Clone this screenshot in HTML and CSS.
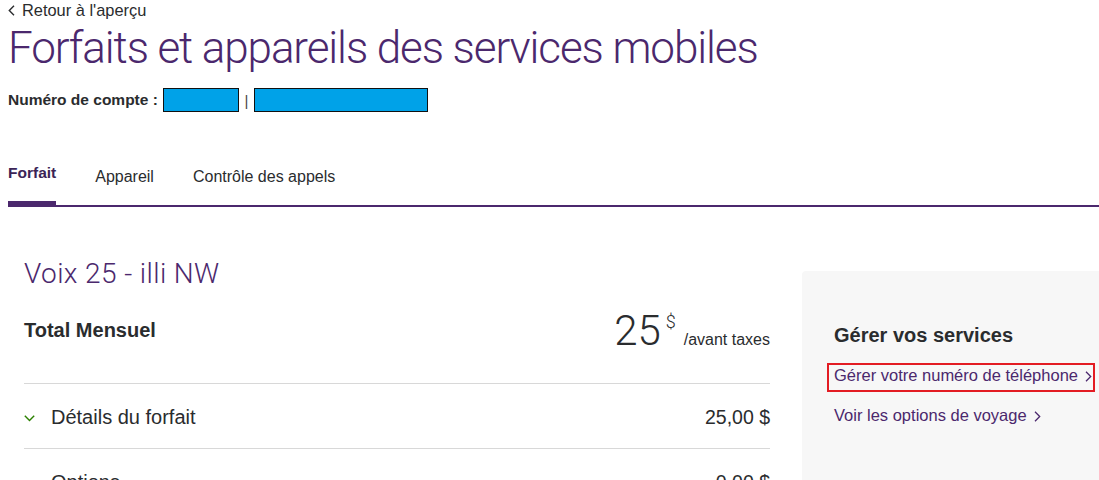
FILE: index.html
```html
<!DOCTYPE html>
<html lang="fr">
<head>
<meta charset="utf-8">
<title>Forfaits et appareils des services mobiles</title>
<link rel="stylesheet" href="styles.css">
</head>
<body>
<div class="page">
  <a class="back" href="#">
    <svg class="back-icon" width="7" height="11" viewBox="0 0 7 11"><path d="M6 0.8 L1.3 5.5 L6 10.2" fill="none" stroke="#2a2c2e" stroke-width="1.4"/></svg>
    <span>Retour à l'aperçu</span>
  </a>
  <h1 class="title">Forfaits et appareils des services mobiles</h1>
  <div class="account">
    <span class="account-label">Numéro de compte :</span>
    <span class="mask mask-short"></span>
    <span class="pipe">|</span>
    <span class="mask mask-long"></span>
  </div>

  <nav class="tabs">
    <a class="tab active" href="#">Forfait</a>
    <a class="tab" href="#">Appareil</a>
    <a class="tab" href="#">Contrôle des appels</a>
  </nav>

  <div class="content">
    <section class="plan">
      <h2 class="plan-name">Voix 25 - illi NW</h2>
      <div class="total">
        <span class="total-label">Total Mensuel</span>
        <div class="price">
          <span class="amount">25</span>
          <span class="cur">$</span>
          <span class="per">/avant taxes</span>
        </div>
      </div>
      <div class="row">
        <span class="row-label">
          <svg class="chev-down" width="11" height="7" viewBox="0 0 11 7"><path d="M0.8 0.8 L5.5 5.6 L10.2 0.8" fill="none" stroke="#2b8000" stroke-width="1.4"/></svg>
          Détails du forfait
        </span>
        <span class="row-value">25,00 $</span>
      </div>
      <div class="row">
        <span class="row-label"><span class="chev-space"></span>Options</span>
        <span class="row-value">0,00 $</span>
      </div>
    </section>

    <aside class="panel">
      <h3 class="panel-title">Gérer vos services</h3>
      <a class="link highlighted" href="#">Gérer votre numéro de téléphone
        <svg class="chev-right" width="7" height="11" viewBox="0 0 7 11"><path d="M1 0.8 L5.7 5.5 L1 10.2" fill="none" stroke="#4b286d" stroke-width="1.3"/></svg>
      </a>
      <a class="link second" href="#">Voir les options de voyage
        <svg class="chev-right" width="7" height="11" viewBox="0 0 7 11"><path d="M1 0.8 L5.7 5.5 L1 10.2" fill="none" stroke="#4b286d" stroke-width="1.3"/></svg>
      </a>
    </aside>
  </div>
</div>
</body>
</html>
```
FILE: styles.css
```css
* { box-sizing: border-box; }
html, body { margin: 0; padding: 0; background: #fff; }
body {
  font-family: "Liberation Sans", Arial, sans-serif;
  color: #2a2c2e;
  overflow: hidden;
}
a { text-decoration: none; color: inherit; }

.page {
  padding-left: 8px;
  width: 1099px;
}

.back {
  display: flex;
  align-items: center;
  gap: 7px;
  height: 20px;
  font-size: 16.4px;
  line-height: 20px;
  color: #2a2c2e;
}
.back-icon { display: block; margin-top: 1px; }

.title {
  margin: 2px 0 0;
  font-family: Roboto, "Liberation Sans", sans-serif;
  font-weight: 300;
  font-size: 44px;
  line-height: 52px;
  letter-spacing: -1.1px;
  color: #4b286d;
  white-space: nowrap;
}

.account {
  display: flex;
  align-items: center;
  margin-top: 14px;
  height: 24px;
}
.account-label {
  font-weight: 700;
  font-size: 15.5px;
  line-height: 20px;
  margin-right: 5px;
}
.mask {
  display: block;
  height: 24px;
  background: #00a2e8;
  border: 1px solid #111;
}
.mask-short { width: 76px; }
.mask-long { width: 174px; }
.pipe {
  font-size: 15px;
  width: 15px;
  text-align: center;
  color: #444;
}

.tabs {
  display: flex;
  align-items: flex-end;
  gap: 39px;
  margin-top: 51px;
  border-bottom: 2px solid #4b286d;
}
.tab {
  position: relative;
  font-size: 16px;
  line-height: 20px;
  padding-bottom: 18px;
  color: #2a2c2e;
}
.tab.active {
  font-weight: 700;
  font-size: 15.5px;
  color: #3b2456;
  padding-bottom: 22px;
}
.tab.active::after {
  content: "";
  position: absolute;
  left: 0;
  right: 0;
  bottom: -2px;
  height: 6px;
  background: #4b286d;
}

.content {
  display: flex;
  align-items: flex-start;
  gap: 32px;
  padding-left: 16px;
  margin-top: 51px;
}

.plan {
  flex: 0 0 746px;
}
.plan-name {
  margin: 0;
  font-family: Roboto, "Liberation Sans", sans-serif;
  font-weight: 300;
  font-size: 28px;
  line-height: 32px;
  letter-spacing: 0.4px;
  color: #4b286d;
}

.total {
  display: flex;
  justify-content: space-between;
  align-items: flex-start;
  margin-top: 20px;
  padding-bottom: 31px;
  border-bottom: 1px solid #d8d8d8;
}
.total-label {
  margin-top: 8px;
  font-weight: 700;
  font-size: 20px;
  line-height: 24px;
}
.price {
  display: flex;
  align-items: flex-start;
  height: 42px;
}
.amount {
  font-family: Roboto, "Liberation Sans", sans-serif;
  font-weight: 300;
  font-size: 42px;
  line-height: 42px;
}
.cur {
  font-family: Roboto, "Liberation Sans", sans-serif;
  font-weight: 300;
  font-size: 18px;
  line-height: 18px;
  margin: 3px 0 0 5px;
}
.per {
  font-size: 16px;
  line-height: 18px;
  margin: 21px 0 0 8px;
  color: #2a2c2e;
}

.row {
  display: flex;
  justify-content: space-between;
  padding: 21px 0 19px;
  border-bottom: 1px solid #d8d8d8;
  font-size: 20px;
  line-height: 24px;
}
.row-label {
  display: flex;
  align-items: center;
}
.chev-down { display: block; margin: 3px 16px 0 0; }
.chev-space { display: block; width: 27px; }
.row-value { color: #2a2c2e; font-size: 19.5px; }

.panel {
  flex: 1 1 auto;
  margin-top: 13px;
  min-height: 240px;
  background: #f7f7f7;
  border-radius: 4px 0 0 0;
  padding: 52px 0 0 32px;
}
.panel-title {
  margin: 0;
  font-weight: 700;
  font-size: 20px;
  line-height: 24px;
  color: #2a2c2e;
}
.link {
  display: inline-flex;
  align-items: center;
  gap: 7px;
  font-size: 16.5px;
  line-height: 20px;
  color: #4b286d;
}
.link .chev-right { display: block; margin-top: 2px; }
.highlighted {
  margin: 16px 0 0 -7px;
  padding: 0 1px 5px 5px;
  border: 2px solid #e31c23;
}
.second {
  display: flex;
  margin-top: 13px;
}
```
